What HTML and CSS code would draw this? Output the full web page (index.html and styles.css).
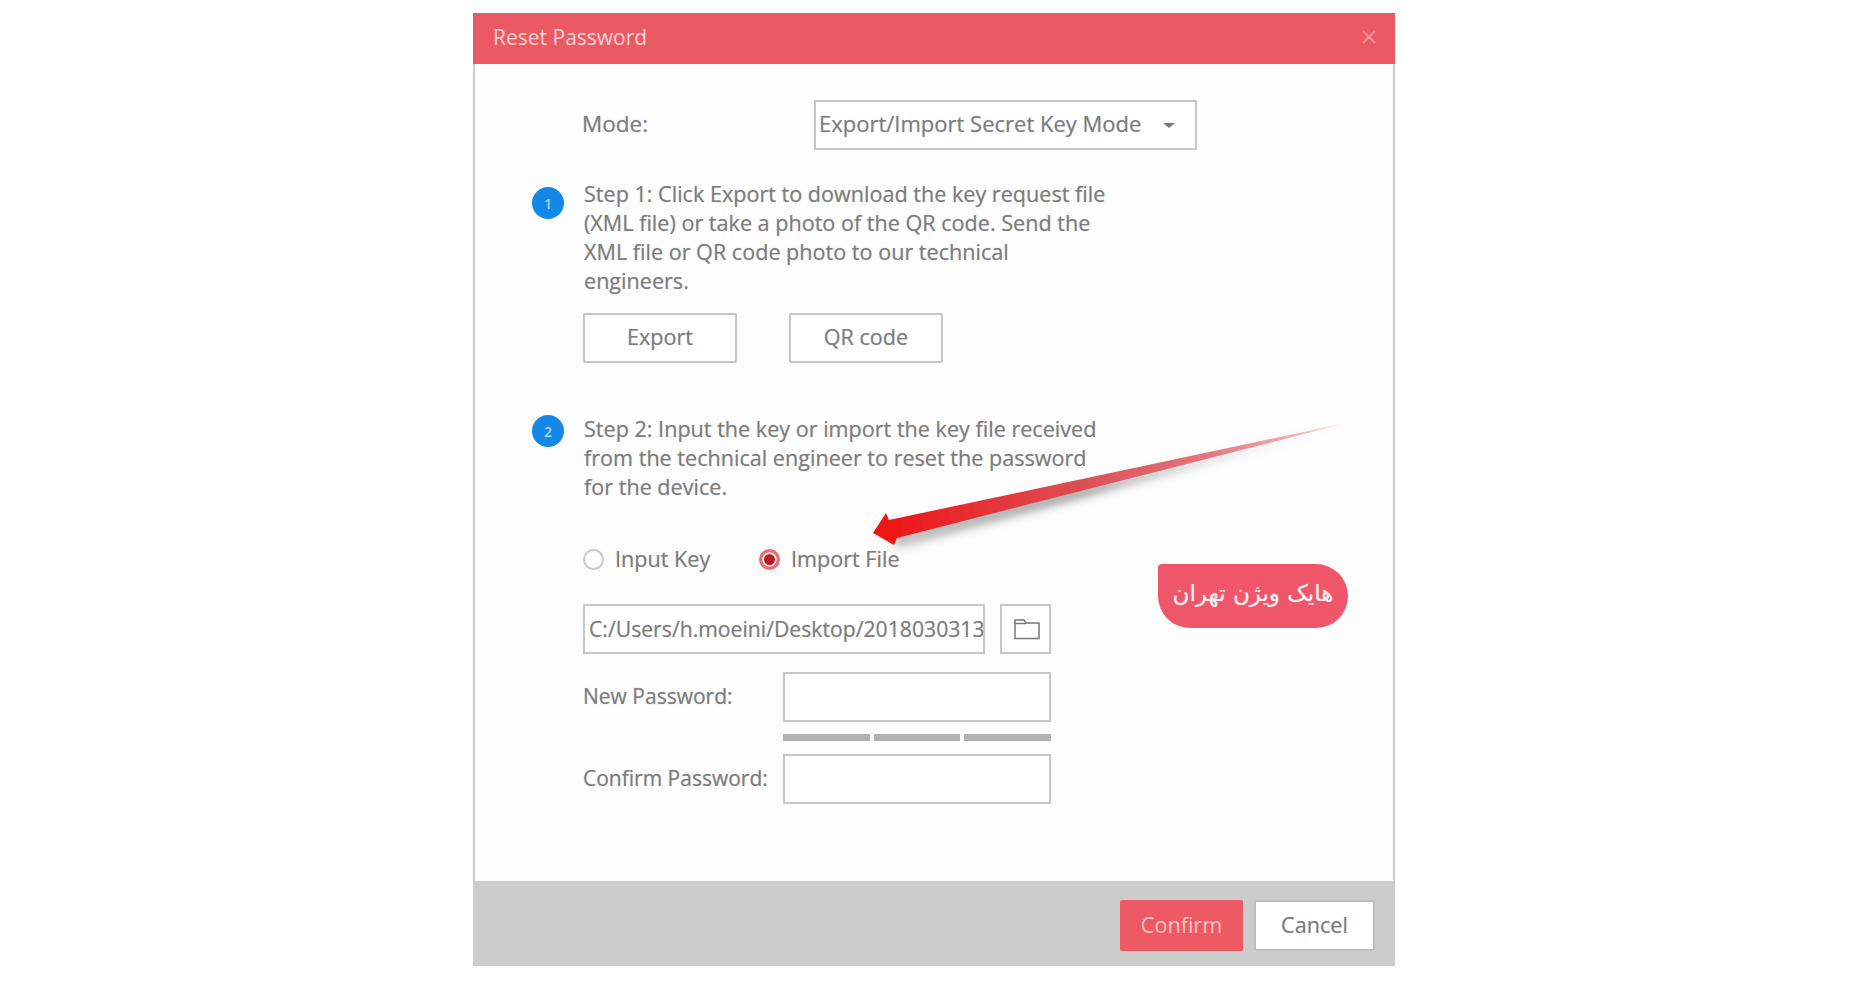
FILE: index.html
```html
<!DOCTYPE html>
<html lang="en">
<head>
    <meta charset="UTF-8">
    <title>Reset Password</title>
    <link rel="stylesheet" href="styles.css">
</head>
<body>
    <div class="dialog">
        <div class="dialog-header">
            <span>Reset Password</span>
            <svg class="close" width="16" height="16" viewBox="0 0 16 16"><path d="M2 2l12 12M14 2L2 14" /></svg>
        </div>

        <div class="dialog-body">
            <div class="mode-row">
                <label>Mode:</label>
                <div class="select">
                    <span>Export/Import Secret Key Mode</span>
                    <i class="caret"></i>
                </div>
            </div>

            <div class="step step-one">
                <span class="num">1</span>
                <div class="step-content">
                    <p>Step 1: Click Export to download the key request file<br>(XML file) or take a photo of the QR code. Send the<br>XML file or QR code photo to our technical<br>engineers.</p>
                    <div class="btn-row">
                        <button class="btn">Export</button>
                        <button class="btn">QR code</button>
                    </div>
                </div>
            </div>

            <div class="step step-two">
                <span class="num">2</span>
                <div class="step-content">
                    <p>Step 2: Input the key or import the key file received<br>from the technical engineer to reset the password<br>for the device.</p>

                    <div class="radio-row">
                        <span class="radio-item"><i class="radio"></i>Input Key</span>
                        <span class="radio-item"><i class="radio checked"></i>Import File</span>
                    </div>

                    <div class="file-row">
                        <div class="input path">C:/Users/h.moeini/Desktop/2018030313</div>
                        <div class="input folder">
                            <svg width="26" height="22" viewBox="0 0 26 22"><path d="M1 20.5V2h9l2 3h13v15.500zM1 5.500h11" /></svg>
                        </div>
                    </div>

                    <div class="pw-row">
                        <label>New Password:</label>
                        <div class="input"></div>
                    </div>
                    <div class="strength"><i></i><i></i><i></i></div>
                    <div class="pw-row">
                        <label>Confirm Password:</label>
                        <div class="input"></div>
                    </div>
                </div>
            </div>
        </div>

        <div class="dialog-footer">
            <button class="btn primary">Confirm</button>
            <button class="btn cancel">Cancel</button>
        </div>

        <!-- annotation on top of the screenshot -->
        <svg class="arrow" width="500" height="150" viewBox="0 0 500 150">
            <defs>
                <linearGradient id="arrowFill" x1="0" y1="130" x2="485" y2="14" gradientUnits="userSpaceOnUse">
                    <stop offset="0" stop-color="#f20e0e" />
                    <stop offset="0.2" stop-color="#e62c30" />
                    <stop offset="0.45" stop-color="#dc5055" />
                    <stop offset="0.7" stop-color="#e4747a" />
                    <stop offset="0.88" stop-color="#efb0b3" />
                    <stop offset="1" stop-color="#fcf0f0" />
                </linearGradient>
                <linearGradient id="shadowFill" x1="0" y1="130" x2="485" y2="14" gradientUnits="userSpaceOnUse">
                    <stop offset="0" stop-color="#777" stop-opacity="0.4" />
                    <stop offset="0.45" stop-color="#555" stop-opacity="0.55" />
                    <stop offset="1" stop-color="#999" stop-opacity="0" />
                </linearGradient>
                <filter id="soft" x="-10%" y="-30%" width="120%" height="160%"><feGaussianBlur stdDeviation="4" /></filter>
                <filter id="edge" x="-5%" y="-20%" width="110%" height="140%"><feGaussianBlur stdDeviation="0.6" /></filter>
            </defs>
            <path d="M20 126L485 16L34 140z" fill="url(#shadowFill)" filter="url(#soft)" />
            <path d="M7 125L20 105L23 112L485 14L31 130L28 137z" fill="url(#arrowFill)" filter="url(#edge)" />
        </svg>

        <div class="pill">هایک ویژن تهران</div>
    </div>
</body>
</html>
```

FILE: styles.css
```css
* { box-sizing: border-box; }
html, body { margin: 0; padding: 0; background: #fff; }
body { font-family: "Open Sans", "Noto Sans", sans-serif; font-size: 21.6px; color: #7d7d7d; height: 1000px; overflow: hidden; text-shadow: 0 0 1px rgba(125,125,125,0.5); }
p { margin: 0; padding-left: 1px; line-height: 29px; }
label { display: block; font-size: 21px; padding-bottom: 3px; }

.dialog { position: relative; width: 922px; height: 953px; margin: 13px 0 0 473px; display: flex; flex-direction: column; background: #fdfdfd; }

.dialog-header { height: 51px; flex: none; background: #eb5a63; color: #fbd3d5; display: flex; align-items: center; justify-content: space-between; padding: 0 18px 4px 20px; font-size: 21px; text-shadow: none; }
.close path { stroke: #f19096; stroke-width: 2; fill: none; }

.dialog-body { flex: 1; border-left: 2px solid #c9c9c9; border-right: 2px solid #c9c9c9; padding: 36px 0 0 57px; }

.mode-row { display: flex; align-items: center; padding-left: 50px; }
.mode-row label { width: 232px; font-size: 22.5px; }
.select { width: 383px; height: 50px; border: 2px solid #c6c6c6; background: #fff; display: flex; align-items: center; justify-content: space-between; padding: 0 20px 4px 3px; font-size: 22px; }
.caret { width: 0; height: 0; margin-top: 4px; border-left: 6px solid transparent; border-right: 6px solid transparent; border-top: 5px solid #777; }

.step { display: flex; gap: 19px; }
.step-one { margin-top: 29px; }
.step-two { margin-top: 51px; }
.num { flex: none; width: 32px; height: 32px; margin-top: 8px; border-radius: 50%; background: #1388e6; color: #a9d5f7; display: flex; align-items: center; justify-content: center; font-size: 14px; font-weight: 600; text-shadow: none; }
.step-two .num { margin-top: 1px; }

.btn-row { display: flex; gap: 52px; margin-top: 18px; }
.btn { font: inherit; color: #7d7d7d; text-shadow: inherit; width: 154px; height: 50px; padding: 0 0 3px; background: #fff; border: 2px solid #c6c6c6; border-radius: 2px; }

.radio-row { display: flex; margin-top: 44px; height: 28px; align-items: center; }
.radio-item { display: flex; align-items: center; gap: 11px; line-height: 26px; }
.radio-item:first-child { width: 176px; }
.radio { width: 21px; height: 21px; border: 2px solid #c9c9c9; border-radius: 50%; background: #fff; }
.radio.checked { border: 3px solid #ee6b73; background: #c4161f; box-shadow: inset 0 0 0 2px #fff; }

.input { height: 50px; border: 2px solid #c6c6c6; background: #fff; }
.file-row { display: flex; gap: 15px; margin-top: 31px; }
.path { width: 402px; padding: 0 0 0 4px; line-height: 46px; white-space: nowrap; overflow: hidden; font-size: 21.2px; }
.folder { width: 51px; display: flex; align-items: center; justify-content: center; padding-left: 2px; }
.folder path { fill: none; stroke: #777; stroke-width: 1.500; }

.pw-row { display: flex; align-items: center; width: 468px; }
.pw-row label { width: 200px; }
.pw-row .input { width: 268px; }
.file-row + .pw-row { margin-top: 18px; }
.strength { display: flex; gap: 4px; margin: 12px 0 13px 200px; width: 268px; }
.strength i { flex: 1; height: 7px; background: #b1b1b1; }

.dialog-footer { height: 85px; flex: none; background: #cccccc; display: flex; justify-content: flex-end; align-items: flex-start; gap: 11px; padding: 19px 20px 0 0; }
.btn.primary { width: 123px; height: 51px; background: #ee5a64; border: none; color: #fbc4c8; text-shadow: none; }
.btn.cancel { width: 121px; height: 51px; border: 2px solid #bdbdbd; }

.arrow { position: absolute; left: 393px; top: 395px; pointer-events: none; }
.pill { position: absolute; left: 685px; top: 551px; width: 190px; height: 64px; background: #f0566a; color: #fdeef0; border-radius: 4px 32px 32px 32px; display: flex; align-items: center; justify-content: center; font-family: "DejaVu Sans", sans-serif; font-size: 23px; direction: rtl; text-shadow: 0 0 1px rgba(253,238,240,0.7); padding-bottom: 7px; }
```
